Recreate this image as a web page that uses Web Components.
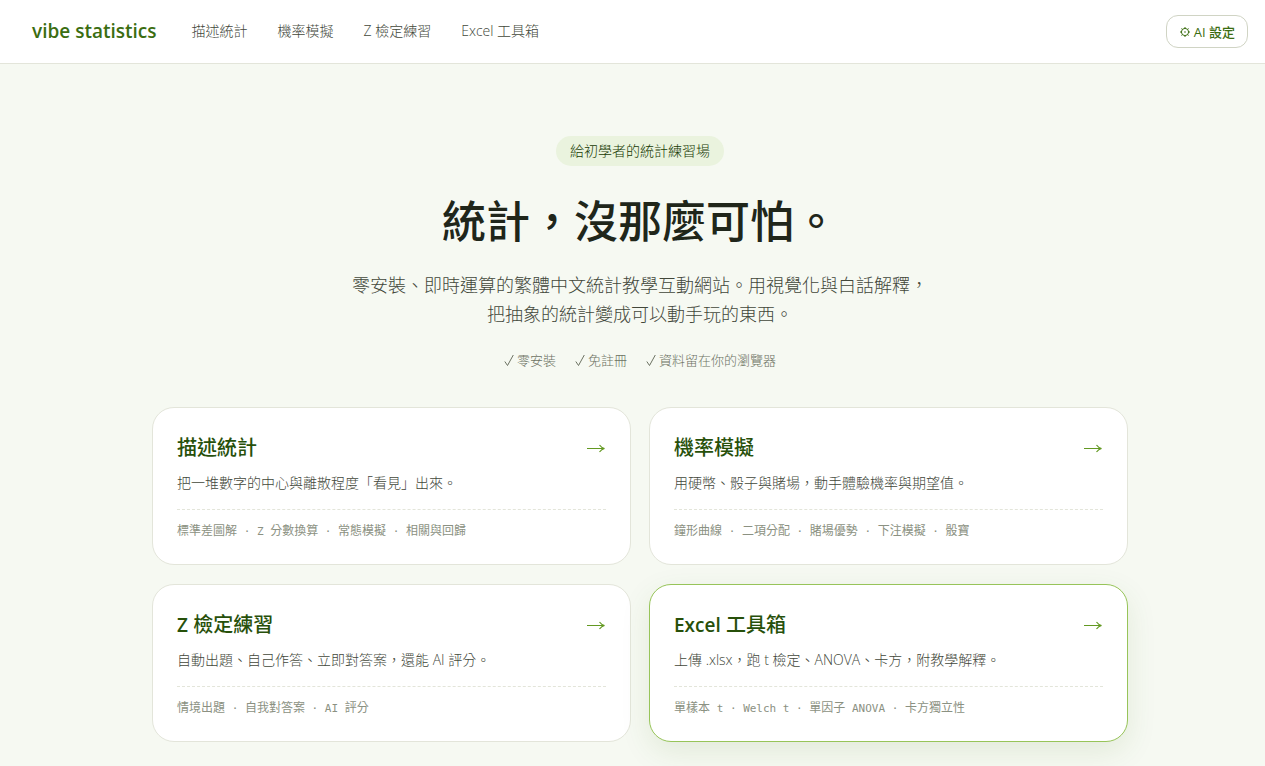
<!DOCTYPE html>
<html lang="zh-Hant">
<head>
<meta charset="utf-8">
<meta name="viewport" content="width=device-width, initial-scale=1">
<title>vibe statistics</title>
<style>
  :root {
    --bg: #f6f9f2;
    --line: #e3e5da;
    --green: #3b6d11;
    --green-dark: #27500a;
    --ink: #20261a;
    --text: #42473a;
    --muted: #8b9182;
    --latin: "Open Sans", "Noto Sans CJK TC", sans-serif;
  }
  body {
    margin: 0;
    background: var(--bg);
    color: var(--text);
    font-family: var(--latin);
    font-weight: 300;
  }
  topic-card b { font-size: 19px; font-weight: 600; }
</style>
</head>
<body>
<site-header>
  <nav-link href="#descriptive">描述統計</nav-link>
  <nav-link href="#probability">機率模擬</nav-link>
  <nav-link href="#z-test">Z 檢定練習</nav-link>
  <nav-link href="#excel">Excel 工具箱</nav-link>
</site-header>
<home-page>
  <hero-intro slot="hero"></hero-intro>
  <topic-card href="#descriptive" tags="標準差圖解 · Z 分數換算 · 常態模擬 · 相關與回歸">
    <span slot="title">描述統計</span>把一堆數字的中心與離散程度「看見」出來。
  </topic-card>
  <topic-card href="#probability" tags="鐘形曲線 · 二項分配 · 賭場優勢 · 下注模擬 · 骰寶">
    <span slot="title">機率模擬</span>用硬幣、骰子與賭場，動手體驗機率與期望值。
  </topic-card>
  <topic-card href="#z-test" tags="情境出題 · 自我對答案 · AI 評分">
    <span slot="title"><b>Z</b> 檢定練習</span>自動出題、自己作答、立即對答案，還能 AI 評分。
  </topic-card>
  <topic-card active href="#excel" tags="單樣本 t · Welch t · 單因子 ANOVA · 卡方獨立性">
    <span slot="title"><b>Excel</b> 工具箱</span>上傳 .xlsx，跑 t 檢定、ANOVA、卡方，附教學解釋。
  </topic-card>
</home-page>

<script>
function define(name, html, setup) {
  const template = document.createElement('template');
  template.innerHTML = html;
  customElements.define(name, class extends HTMLElement {
    constructor() {
      super();
      this.attachShadow({ mode: 'open' }).append(template.content.cloneNode(true));
    }
    connectedCallback() { if (setup) setup(this, this.shadowRoot); }
  });
}

define('nav-link', `
  <style>
    :host { display: block; }
    a { display: block; color: var(--text); text-decoration: none; font-size: 14px; line-height: 24px; white-space: nowrap; }
  </style>
  <a><slot></slot></a>`,
  (el, root) => { root.querySelector('a').href = el.getAttribute('href'); });

define('site-header', `
  <style>
    :host { display: block; background: #fff; border-bottom: 1px solid var(--line); }
    header { display: flex; align-items: center; min-height: 63px; padding: 0 17px 0 32px; }
    .brand { color: var(--green); font-size: 19px; font-weight: 600; line-height: 28px; text-decoration: none; margin-right: 35px; padding-bottom: 2px; white-space: nowrap; }
    nav { display: flex; gap: 30px; padding-bottom: 2px; }
    button {
      display: flex; align-items: center; gap: 3px; margin-left: auto; height: 33px; padding: 0 12px;
      border: 1px solid #d0d4c4; border-radius: 12px; background: #fff; color: var(--green);
      font: 500 13px/20px var(--latin); white-space: nowrap;
    }
    svg { width: 12px; height: 12px; }
  </style>
  <header>
    <a class="brand" href="#home">vibe statistics</a>
    <nav><slot></slot></nav>
    <button type="button">
      <svg viewBox="0 0 12 12" fill="none" stroke="currentColor" aria-hidden="true">
        <circle cx="6" cy="6" r="3.6"/><circle cx="6" cy="6" r=".8" fill="currentColor" stroke="none"/>
        <path d="M6 1v1.4M6 9.6V11M1 6h1.4M9.600 6H11M2.500 2.500l1 1M8.500 8.500l1 1M9.500 2.500l-1 1M3.500 8.500l-1 1" />
      </svg>
      AI 設定
    </button>
  </header>`);

define('trust-point', `
  <style>
    :host { display: flex; align-items: center; gap: 3px; }
    svg { width: 10px; height: 13px; }
  </style>
  <svg viewBox="0 0 10 13" fill="none" stroke="currentColor" aria-hidden="true"><path d="M.8 7.500L3.500 11.500 9.300 1"/></svg>
  <span><slot></slot></span>`);

define('hero-intro', `
  <style>
    :host { display: flex; flex-direction: column; align-items: center; text-align: center; }
    .pill { padding: 3px 14px; border-radius: 15px; background: #eaf3de; color: #173a02; font-size: 14px; line-height: 24px; }
    h1 { margin: 27px 0 0; color: var(--ink); font-size: 44px; line-height: 56px; font-weight: 500; }
    p { margin: 22px 0 0; font-size: 18px; line-height: 29px; }
    .points { display: flex; flex-wrap: wrap; justify-content: center; gap: 19px; margin-top: 21px; color: #6c7262; font-size: 13px; line-height: 20px; }
  </style>
  <div class="pill">給初學者的統計練習場</div>
  <h1>統計，沒那麼可怕。</h1>
  <p>零安裝、即時運算的繁體中文統計教學互動網站。用視覺化與白話解釋，<br>把抽象的統計變成可以動手玩的東西。</p>
  <div class="points">
    <trust-point>零安裝</trust-point>
    <trust-point>免註冊</trust-point>
    <trust-point>資料留在你的瀏覽器</trust-point>
  </div>`);

define('topic-card', `
  <style>
    :host { display: block; }
    a {
      display: block; padding: 24px; border: 1px solid var(--line); border-radius: 22px;
      background: #fff; color: var(--text); text-decoration: none;
    }
    :host([active]) a { border-color: #97c459; box-shadow: 0 10px 30px rgba(59, 109, 17, .1); }
    .head { display: flex; align-items: center; justify-content: space-between; }
    h2 { margin: 0; color: var(--green-dark); font-size: 20px; line-height: 32px; font-weight: 500; }
    svg { width: 20px; height: 12px; color: #639922; }
    p { margin: 7px 0 0; font-size: 14px; line-height: 24px; }
    .tags {
      margin-top: 14px; padding: 11px 0 1px; border-top: 1px dashed var(--line);
      color: var(--muted); font-family: "Noto Sans CJK TC", sans-serif; font-size: 12px; line-height: 18px; font-weight: 400; white-space: pre-wrap;
    }
    .tags code { font-family: "DejaVu Sans Mono", monospace; font-size: 11px; line-height: 1; }
  </style>
  <a>
    <div class="head">
      <h2><slot name="title"></slot></h2>
      <svg viewBox="0 0 20 12" fill="none" stroke="currentColor" stroke-width="1.2" aria-hidden="true"><path d="M1 6.500h17M13.500 3Q15.500 5.800 18.500 6.500 15.500 7.200 13.500 10"/></svg>
    </div>
    <p><slot></slot></p>
    <div class="tags"></div>
  </a>`,
  (el, root) => {
    root.querySelector('a').href = el.getAttribute('href');
    const parts = el.getAttribute('tags').split(/([\x20-\x7e·]+)/).filter(Boolean);
    root.querySelector('.tags').replaceChildren(...parts.map((part) => {
      if (!/^[\x20-\x7e·]/.test(part)) return part;
      const code = document.createElement('code');
      code.textContent = part;
      return code;
    }));
  });

define('home-page', `
  <style>
    :host { display: block; padding: 72px 0 24px 15px; }
    main { max-width: 976px; margin: 0 auto; }
    .grid { display: grid; grid-template-columns: repeat(2, 1fr); gap: 19px 18px; margin-top: 37px; }
    @media (max-width: 720px) { .grid { grid-template-columns: 1fr; } }
  </style>
  <main>
    <slot name="hero"></slot>
    <div class="grid"><slot></slot></div>
  </main>`);
</script>
</body>
</html>
